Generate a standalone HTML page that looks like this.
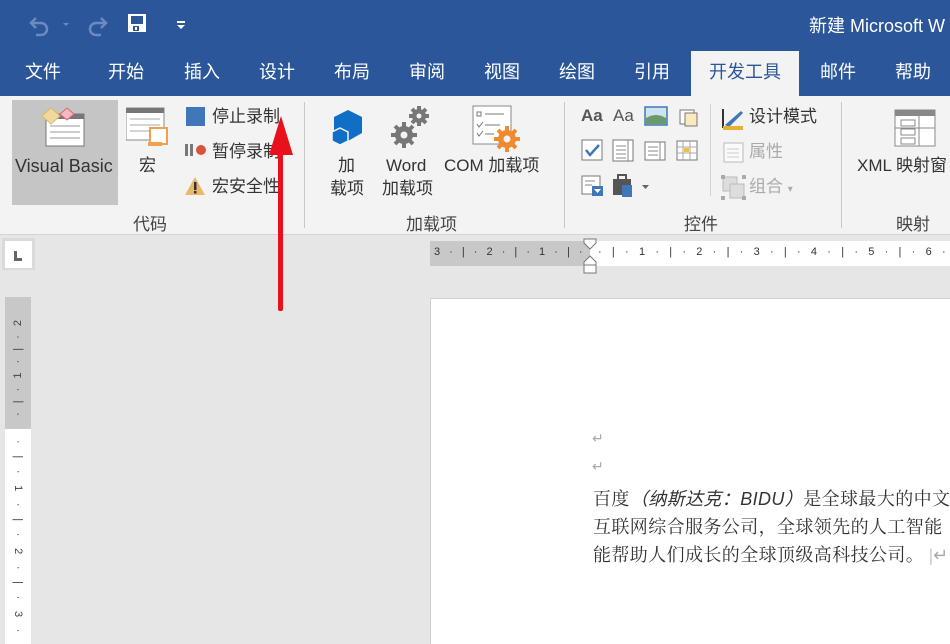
<!DOCTYPE html>
<html style="width:950px;height:644px;overflow:hidden"><head><meta charset="utf-8">
<style>
*{margin:0;padding:0;box-sizing:border-box}
body{width:950px;height:644px;overflow:hidden;background:#e6e6e6;font-family:"Liberation Sans","Noto Sans CJK SC",sans-serif;position:relative;color:#333}
.a{position:absolute;white-space:nowrap}
.tab{position:absolute;top:60px;color:#fff;font-size:18px;line-height:24px}
.rb{font-size:17px;color:#333;line-height:22px}
.grp{font-size:17px;color:#444;top:210px}
.doc{font-family:"Liberation Serif","Noto Serif CJK SC",serif;font-size:18px;color:#333;left:593px;letter-spacing:0.4px}
</style></head><body>
<div class="a" style="left:0;top:0;width:950px;height:96px;background:#2b579a"></div>
<svg class="a" style="left:26px;top:10px" width="170" height="30">
<path d="M10 8 L5 13 L10 18 M5 13 H15 A6 6 0 0 1 15 25 H10" fill="none" stroke="#6b8ac0" stroke-width="2.5"/>
<path d="M37 13 l3 3 l3-3z" fill="#6b8ac0"/>
<path d="M75 8 L80 13 L75 18 M80 13 H70 A6 6 0 0 0 70 25 H75" fill="none" stroke="#6b8ac0" stroke-width="2.5"/>
<rect x="102" y="4" width="18" height="18" fill="#fff"/><rect x="105" y="6" width="12" height="8" fill="#2b579a"/><rect x="107" y="16" width="6" height="5" fill="#2b579a"/><rect x="109" y="17" width="2" height="3" fill="#fff"/>
<rect x="151" y="11" width="8" height="2" fill="#fff"/><path d="M151 15 h8 l-4 4z" fill="#fff"/>
</svg>
<div class="a" style="left:809px;top:12px;color:#fff;font-size:18px">新建 Microsoft W</div>
<div class="a" style="left:691px;top:51px;width:108px;height:46px;background:#f3f3f3"></div>
<div class="tab" style="left:25px">文件</div><div class="tab" style="left:108px">开始</div><div class="tab" style="left:184px">插入</div><div class="tab" style="left:259px">设计</div><div class="tab" style="left:334px">布局</div><div class="tab" style="left:409px">审阅</div><div class="tab" style="left:484px">视图</div><div class="tab" style="left:559px">绘图</div><div class="tab" style="left:634px">引用</div><div class="tab" style="left:709px;color:#2b579a">开发工具</div><div class="tab" style="left:820px">邮件</div><div class="tab" style="left:895px">帮助</div>
<div class="a" style="left:0;top:96px;width:950px;height:139px;background:#f3f3f3;border-bottom:1px solid #d4d4d4"></div>
<div class="a" style="left:12px;top:100px;width:106px;height:105px;background:#c5c5c5"></div>
<svg class="a" style="left:40px;top:104px" width="50" height="45"><rect x="6" y="10" width="38" height="32" fill="#fff" stroke="#777"/><rect x="6" y="10" width="38" height="5" fill="#777"/><g stroke="#999"><line x1="10" y1="22" x2="40" y2="22"/><line x1="10" y1="28" x2="40" y2="28"/><line x1="10" y1="34" x2="40" y2="34"/></g><path d="M2 12 l9-8 l9 8 l-9 8z" fill="#f0d9a0" stroke="#e0b860"/><path d="M20 10 l7-6 l7 6 l-7 6z" fill="#f2b8c6" stroke="#d66"/></svg>
<div class="a rb" style="left:15px;top:155px;font-size:18px">Visual Basic</div>
<svg class="a" style="left:126px;top:106px" width="46" height="45"><rect x="0" y="2" width="38" height="32" fill="#fff" stroke="#888"/><rect x="0" y="2" width="38" height="5" fill="#777"/><g stroke="#aaa"><line x1="4" y1="13" x2="34" y2="13"/><line x1="4" y1="19" x2="34" y2="19"/><line x1="4" y1="25" x2="30" y2="25"/></g><rect x="24" y="22" width="17" height="16" fill="#fff" stroke="#f0a050" stroke-width="2"/><path d="M22 38 h14" stroke="#f0a050" stroke-width="4"/></svg>
<div class="a rb" style="left:139px;top:155px">宏</div>
<div class="a" style="left:186px;top:107px;width:19px;height:19px;background:#3f77b8"></div>
<div class="a rb" style="left:212px;top:106px">停止录制</div>
<div class="a" style="left:185px;top:144px;width:3px;height:12px;background:#777"></div><div class="a" style="left:190px;top:144px;width:3px;height:12px;background:#777"></div><div class="a" style="left:196px;top:145px;width:10px;height:10px;border-radius:50%;background:#d9533a"></div>
<div class="a rb" style="left:212px;top:141px">暂停录制</div>
<svg class="a" style="left:184px;top:176px" width="22" height="20"><path d="M11 1 L21 19 H1z" fill="#e8b96a"/><rect x="10" y="6" width="2.5" height="8" fill="#333"/><rect x="10" y="15" width="2.5" height="2.5" fill="#333"/></svg>
<div class="a rb" style="left:212px;top:176px">宏安全性</div>
<div class="a grp" style="left:133px">代码</div>
<div class="a" style="left:304px;top:102px;width:1px;height:126px;background:#c8c8c8"></div>
<svg class="a" style="left:330px;top:108px" width="36" height="40"><path d="M18 2 L32 9 V25 L18 33 L4 25 V9z" fill="#0f6fc6"/><path d="M10 20 L18 24 V33 L10 37 L2 33 V24z" fill="#0f6fc6" stroke="#f3f3f3" stroke-width="1.5"/></svg>
<div class="a rb" style="left:338px;top:155px">加</div><div class="a rb" style="left:330px;top:178px">载项</div>
<svg class="a" style="left:388px;top:104px" width="44" height="46"><g fill="#777"><circle cx="16" cy="31" r="9"/><circle cx="31" cy="12" r="7"/></g><g stroke="#777" stroke-width="4"><line x1="16" y1="18" x2="16" y2="44"/><line x1="3" y1="31" x2="29" y2="31"/><line x1="7" y1="22" x2="25" y2="40"/><line x1="25" y1="22" x2="7" y2="40"/><line x1="31" y1="2" x2="31" y2="22"/><line x1="21" y1="12" x2="41" y2="12"/><line x1="24" y1="5" x2="38" y2="19"/><line x1="38" y1="5" x2="24" y2="19"/></g><circle cx="16" cy="31" r="3.5" fill="#f3f3f3"/><circle cx="31" cy="12" r="2.5" fill="#f3f3f3"/></svg>
<div class="a rb" style="left:386px;top:155px">Word</div><div class="a rb" style="left:382px;top:178px">加载项</div>
<svg class="a" style="left:472px;top:104px" width="50" height="50"><rect x="1" y="2" width="38" height="38" fill="#fff" stroke="#888"/><g stroke="#777" fill="none"><rect x="5" y="8" width="4" height="4"/><line x1="13" y1="10" x2="32" y2="10"/><path d="M5 20 l2 3 l4-5"/><line x1="13" y1="21" x2="28" y2="21"/><path d="M5 29 l2 3 l4-5"/><line x1="13" y1="30" x2="22" y2="30"/></g><circle cx="35" cy="35" r="9" fill="#f08a30"/><g stroke="#f08a30" stroke-width="4"><line x1="35" y1="22" x2="35" y2="48"/><line x1="22" y1="35" x2="48" y2="35"/><line x1="26" y1="26" x2="44" y2="44"/><line x1="44" y1="26" x2="26" y2="44"/></g><circle cx="35" cy="35" r="3.5" fill="#f3f3f3"/></svg>
<div class="a rb" style="left:444px;top:155px">COM 加载项</div>
<div class="a grp" style="left:406px">加载项</div>
<div class="a" style="left:564px;top:102px;width:1px;height:126px;background:#c8c8c8"></div>
<div class="a" style="left:581px;top:106px;font-size:17px;font-weight:bold;color:#555">Aa</div>
<div class="a" style="left:613px;top:106px;font-size:17px;color:#555">Aa</div>
<svg class="a" style="left:644px;top:106px" width="70" height="30">
<rect x="1" y="1" width="22" height="18" fill="#cfe2f0" stroke="#3f77b8" stroke-width="1.5"/><path d="M2 12 q10-6 20 0 v6 h-20z" fill="#6a9a6a"/>
<rect x="36" y="4" width="14" height="14" fill="#fff" stroke="#777"/><rect x="41" y="7" width="12" height="13" fill="#fbeac0" stroke="#777"/>
</svg>
<svg class="a" style="left:580px;top:138px" width="120" height="64">
<rect x="2" y="2" width="20" height="20" fill="#fff" stroke="#777"/><path d="M6 12 l4 5 l9-10" stroke="#3f77b8" stroke-width="2.5" fill="none"/>
<rect x="33" y="2" width="20" height="21" fill="#fff" stroke="#777"/><g stroke="#888"><line x1="36" y1="8" x2="46" y2="8"/><line x1="36" y1="12" x2="46" y2="12"/><line x1="36" y1="16" x2="46" y2="16"/><line x1="36" y1="20" x2="46" y2="20"/><line x1="48" y1="2" x2="48" y2="23"/></g>
<rect x="65" y="4" width="20" height="18" fill="#fff" stroke="#777"/><g stroke="#888"><line x1="68" y1="9" x2="78" y2="9"/><line x1="68" y1="13" x2="78" y2="13"/><line x1="68" y1="17" x2="78" y2="17"/><line x1="80" y1="4" x2="80" y2="22"/></g>
<rect x="97" y="3" width="20" height="19" fill="#fff" stroke="#777"/><g stroke="#aaa"><line x1="97" y1="9" x2="117" y2="9"/><line x1="97" y1="15" x2="117" y2="15"/><line x1="103" y1="3" x2="103" y2="22"/><line x1="110" y1="3" x2="110" y2="22"/></g><rect x="104" y="10" width="5" height="4" fill="#f0c040"/>
<rect x="2" y="38" width="18" height="18" fill="#fff" stroke="#777"/><g stroke="#888"><line x1="5" y1="43" x2="15" y2="43"/><line x1="5" y1="47" x2="12" y2="47"/></g><rect x="12" y="48" width="11" height="10" fill="#3f77b8"/><path d="M14 51 h7 l-3.5 4z" fill="#fff"/>
<rect x="33" y="41" width="18" height="16" fill="#555"/><rect x="38" y="37" width="8" height="5" fill="none" stroke="#555" stroke-width="2"/><rect x="42" y="47" width="10" height="12" fill="#3f77b8"/><path d="M62 47 h7 l-3.5 4z" fill="#666"/>
</svg>
<div class="a" style="left:710px;top:104px;width:1px;height:92px;background:#d4d4d4"></div>
<svg class="a" style="left:721px;top:107px" width="24" height="24"><path d="M2 2 v18 h20" fill="none" stroke="#333" stroke-width="2"/><path d="M4 18 L20 4 l2 2 L8 20z" fill="#3f77b8"/><rect x="2" y="19" width="20" height="4" fill="#e8b030"/></svg>
<div class="a rb" style="left:749px;top:106px">设计模式</div>
<svg class="a" style="left:723px;top:142px" width="22" height="22"><rect x="1" y="1" width="19" height="19" fill="#fafafa" stroke="#bbb"/><g stroke="#ccc"><line x1="4" y1="7" x2="16" y2="7"/><line x1="4" y1="11" x2="16" y2="11"/><line x1="4" y1="15" x2="16" y2="15"/></g></svg>
<div class="a rb" style="left:749px;top:141px;color:#aaa">属性</div>
<svg class="a" style="left:721px;top:175px" width="26" height="26"><rect x="2" y="2" width="14" height="14" fill="#ddd" stroke="#bbb"/><rect x="9" y="9" width="14" height="14" fill="#ddd" stroke="#bbb"/><g fill="#aaa"><rect x="0" y="0" width="4" height="4"/><rect x="21" y="21" width="4" height="4"/><rect x="0" y="21" width="4" height="4"/><rect x="21" y="0" width="4" height="4"/></g></svg>
<div class="a rb" style="left:749px;top:176px;color:#aaa">组合 <span style="font-size:10px">▾</span></div>
<div class="a grp" style="left:684px">控件</div>
<div class="a" style="left:841px;top:102px;width:1px;height:126px;background:#c8c8c8"></div>
<svg class="a" style="left:893px;top:108px" width="44" height="40"><rect x="2" y="2" width="40" height="36" fill="#fff" stroke="#888"/><rect x="2" y="2" width="40" height="6" fill="#888"/><g stroke="#888" fill="none"><rect x="8" y="12" width="14" height="6"/><rect x="8" y="21" width="14" height="6"/><rect x="8" y="30" width="14" height="6"/><line x1="26" y1="8" x2="26" y2="38"/><line x1="2" y1="20" x2="42" y2="20"/></g></svg>
<div class="a rb" style="left:857px;top:155px">XML 映射窗</div>
<div class="a grp" style="left:896px">映射</div>
<div class="a" style="left:2px;top:238px;width:33px;height:32px;background:#dadada"></div>
<div class="a" style="left:5px;top:241px;width:27px;height:27px;background:#fff"></div>
<div class="a" style="left:14px;top:251px;width:3px;height:9px;background:#666"></div><div class="a" style="left:14px;top:258px;width:8px;height:3px;background:#666"></div>
<div class="a" style="left:430px;top:241px;width:520px;height:25px;background:#fff"></div>
<div class="a" style="left:430px;top:241px;width:160px;height:25px;background:#c8c8c8"></div>
<div class="a" style="left:434px;top:246px;font-size:11px;color:#333;letter-spacing:3px">3 · | · 2 · | · 1 · | ·</div>
<div class="a" style="left:598px;top:246px;font-size:11px;color:#333;letter-spacing:3.6px">· | · 1 · | · 2 · | · 3 · | · 4 · | · 5 · | · 6 · | · 7</div>
<svg class="a" style="left:583px;top:238px" width="15" height="36"><path d="M1 1 h12 v4 l-6 6 l-6-6z" fill="#fff" stroke="#777"/><path d="M1 24 l6-6 l6 6 v3 h-12z M1 27 h12 v8 h-12z" fill="#fff" stroke="#777"/></svg>
<div class="a" style="left:5px;top:297px;width:26px;height:347px;background:#fff;overflow:hidden">
<div class="a" style="left:0;top:0;width:26px;height:132px;background:#c8c8c8"></div>
<div class="a" style="left:7px;top:20px;font-size:11px;color:#444;writing-mode:vertical-rl;transform:rotate(180deg);line-height:12px;letter-spacing:3px">· | · 1 · | · 2</div>
<div class="a" style="left:7px;top:143px;font-size:11px;color:#444;writing-mode:vertical-rl;line-height:12px;letter-spacing:4.3px">· | · 1 · | · 2 · | · 3 · | · 4</div>
</div>
<div class="a" style="left:430px;top:298px;width:520px;height:346px;background:#fff;border-left:1px solid #d0d0d0;border-top:1px solid #d0d0d0"></div>
<div class="a" style="left:592px;top:430px;color:#aaa;font-size:14px">↵</div>
<div class="a" style="left:592px;top:458px;color:#aaa;font-size:14px">↵</div>
<div class="a doc" style="top:485px">百度<i style="font-family:'Liberation Sans','Noto Sans CJK SC',sans-serif">（纳斯达克：BIDU）</i>是全球最大的中文</div>
<div class="a doc" style="top:513px">互联网综合服务公司，全球领先的人工智能</div>
<div class="a doc" style="top:541px">能帮助人们成长的全球顶级高科技公司。 <span style="color:#aaa">|↵</span></div>
<svg class="a" style="left:266px;top:110px" width="30" height="205"><rect x="12" y="35" width="5" height="166" rx="2" fill="#e8101a"/><path d="M15 6 L27 45 H3z" fill="#e8101a"/></svg>
</body></html>
